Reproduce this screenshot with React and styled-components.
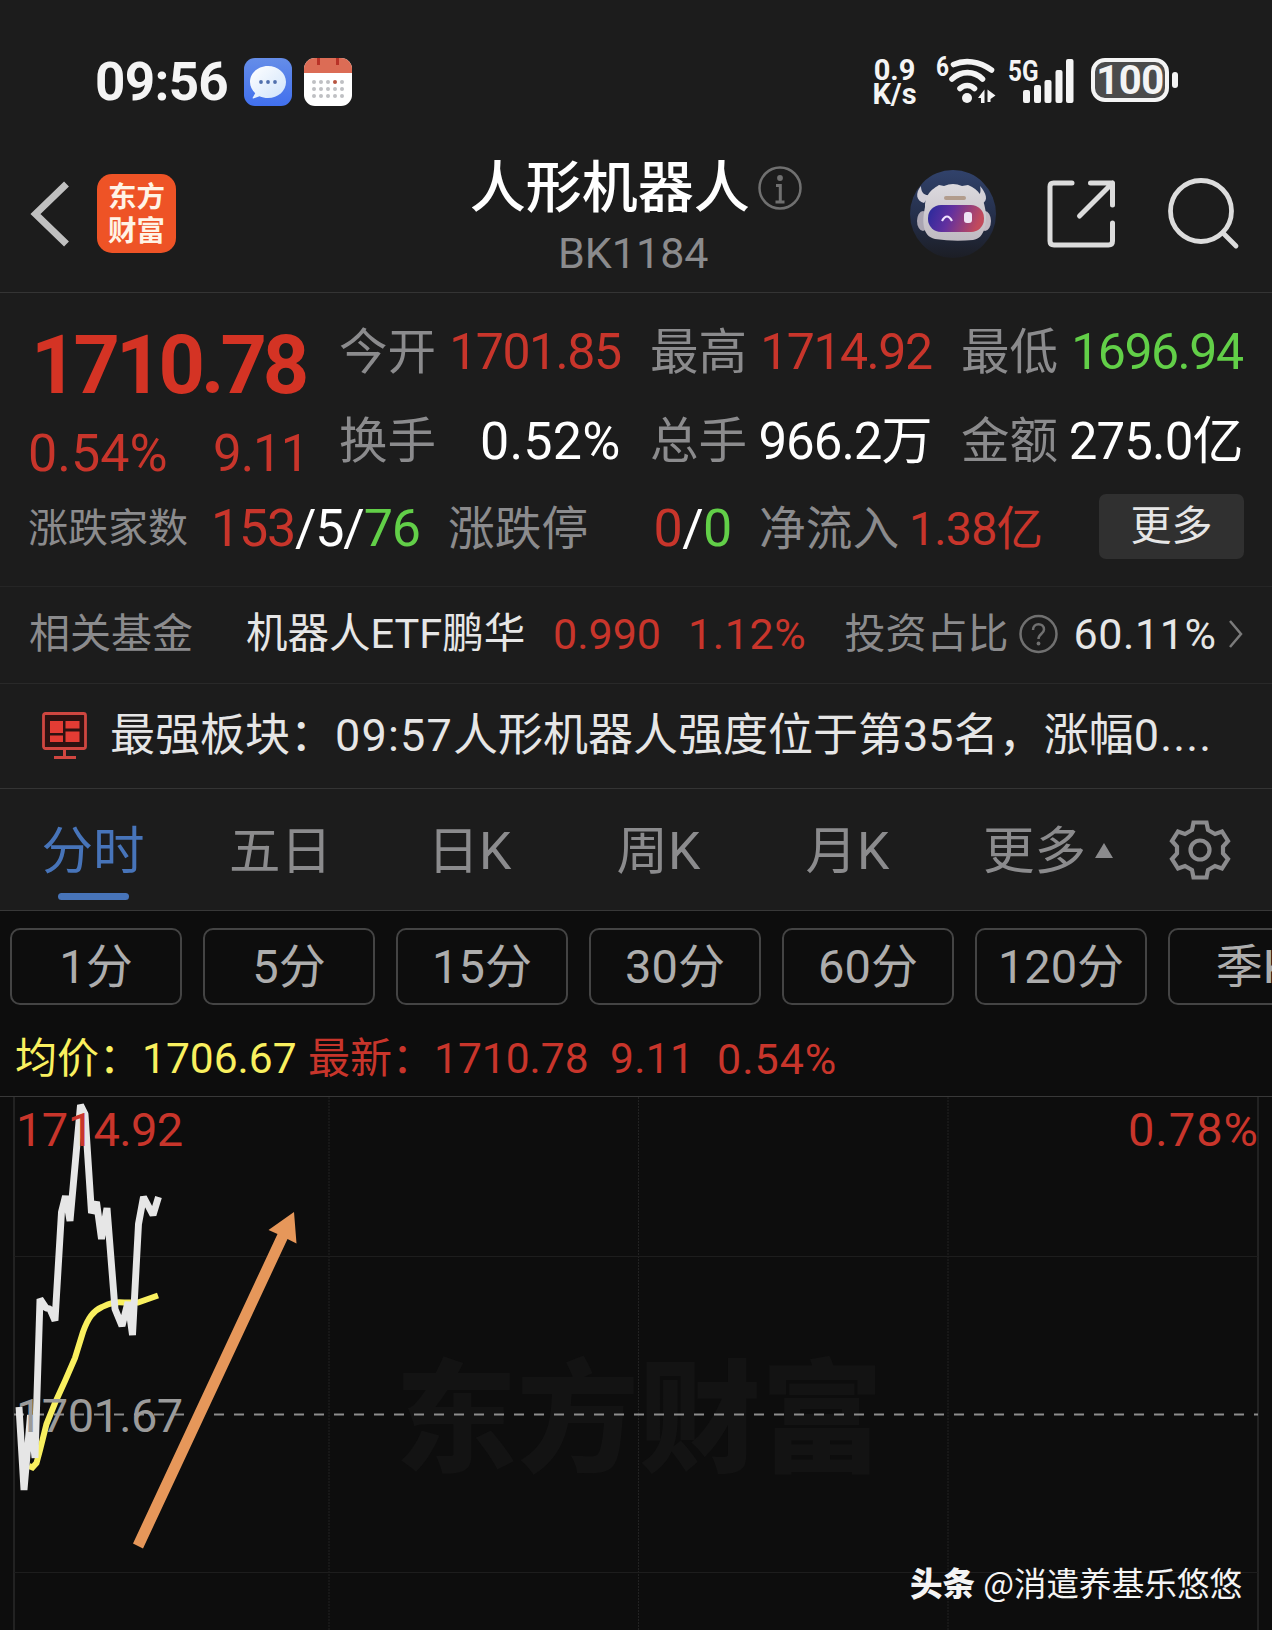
import React from 'react';
import styled, { createGlobalStyle } from 'styled-components';

const GlobalStyle = createGlobalStyle`
    * {
        box-sizing: border-box;
    }

    body {
        margin: 0;
        background: #0d0d0d;
        font-family: Roboto, 'Noto Sans CJK SC', sans-serif;
        overflow: hidden;
    }
`;

const RED = '#c8352b';
const GREEN = '#62cf48';
const GREY = '#8b8b8d';

const Screen = styled.div`
    width: 1272px;
    height: 1630px;
    overflow: hidden;
    display: flex;
    flex-direction: column;
    background: #0d0d0d;
    color: #ffffff;
    white-space: nowrap;
`;

const TopArea = styled.div`
    background: #1c1c1c;
`;

/* ---------- status bar ---------- */

const StatusBar = styled.div`
    height: 132px;
    padding: 32px 94px 0 95px;
    display: flex;
    align-items: center;
`;

const Clock = styled.div`
    width: 149px;
    font-size: 53px;
    font-weight: 700;
    line-height: 80px;
    letter-spacing: -0.7px;
    color: #f4f4f4;
`;

const AppBadges = styled.div`
    display: flex;
    gap: 12px;
    flex: 1;
`;

const NetSpeed = styled.div`
    width: 65px;
    font-size: 29px;
    font-weight: 700;
    line-height: 24.5px;
    text-align: center;
    padding-right: 18px;
    color: #f4f4f4;
`;

const WifiBox = styled.div`
    width: 72px;
    height: 50px;
    position: relative;
`;

const TinyTag = styled.span`
    position: absolute;
    left: 0;
    top: ${props => props.$top}px;
    font-size: ${props => props.$size}px;
    line-height: ${props => props.$size}px;
    font-weight: 700;
    transform: scaleX(0.84);
    transform-origin: left;
    color: #f4f4f4;
`;

const SignalBox = styled.div`
    width: 83px;
    height: 50px;
    position: relative;
`;

const Battery = styled.div`
    width: 78px;
    height: 44px;
    margin-top: -4px;
    border: 4px solid #f4f4f4;
    border-radius: 14px;
    background: #4b4b4b;
    font-size: 40px;
    font-weight: 700;
    line-height: 38px;
    letter-spacing: -0.5px;
    text-align: center;
    color: #f4f4f4;
`;

const BatteryTip = styled.div`
    width: 6px;
    height: 16px;
    margin: -4px 0 0 3px;
    border-radius: 3px;
    background: #f4f4f4;
`;

/* ---------- navigation ---------- */

const NavBar = styled.div`
    height: 161px;
    padding: 3px 32.5px 0 30px;
    display: grid;
    grid-template-columns: 1fr auto 1fr;
    align-items: center;
    border-bottom: 1px solid #343434;
`;

const NavLeft = styled.div`
    display: flex;
    align-items: center;
    gap: 26px;
`;

const NavRight = styled.div`
    display: flex;
    align-items: center;
    justify-content: flex-end;
    gap: 51px;
`;

const BrandLogo = styled.div`
    width: 79px;
    height: 79px;
    border-radius: 15px;
    background: #ee5326;
    padding-top: 6.5px;
    font-size: 28.5px;
    font-weight: 700;
    line-height: 34px;
    text-align: center;
    color: #fff3e6;
`;

const TitleBlock = styled.div`
    display: flex;
    flex-direction: column;
    align-items: center;
    padding: 7px 0 0 2px;
`;

const Title = styled.div`
    display: flex;
    align-items: center;
    gap: 8px;
    height: 72px;
    font-size: 56px;
    font-weight: 500;
    line-height: 72px;
`;

const Code = styled.div`
    padding-right: 5px;
    font-size: 43px;
    line-height: 59px;
    color: ${GREY};
`;

/* ---------- quote ---------- */

const Quote = styled.div`
    height: 294px;
    padding: 15px 28px 0 28px;
    border-bottom: 1px solid #252525;
`;

const QuoteTop = styled.div`
    display: flex;
    height: 178px;
`;

const PriceBlock = styled.div`
    width: 312px;
`;

const Price = styled.div`
    padding-left: 3px;
    line-height: 116px;
    font-size: 81px;
    font-weight: 700;
    letter-spacing: -4px;
    color: #d43324;
`;

const Change = styled.div`
    display: grid;
    grid-template-columns: 185px 100px;
    line-height: 60px;
    font-size: 52px;
    color: ${RED};
`;

const StatGrid = styled.div`
    display: grid;
    grid-template-columns: repeat(3, 283px);
    grid-auto-rows: 89px;
    column-gap: 28px;
`;

const Stat = styled.div`
    display: flex;
    justify-content: space-between;
    padding-right: 1.5px;
    line-height: 89px;
    font-size: 48.5px;
    color: ${GREY};
`;

const Breadth = styled.div`
    display: grid;
    grid-template-columns: 183px 237px 205.5px 105.5px 150px 190px 145px;
    align-items: center;
    height: 81px;
    padding-top: 4px;
    line-height: 60px;
`;

const Label = styled.span`
    font-size: ${props => props.$size}px;
    color: ${GREY};
`;

const Value = styled.span`
    font-size: ${props => props.$size}px;
    letter-spacing: ${props => props.$track || 0}px;
    color: ${props => props.$color || '#ffffff'};
`;

const Tint = styled.span`
    color: ${props => props.$color};
`;

const MoreButton = styled.button`
    width: 145px;
    height: 65px;
    margin-bottom: 4px;
    border: 0;
    border-radius: 7px;
    padding: 0;
    background: #303030;
    font-family: inherit;
    font-size: 41px;
    line-height: 65px;
    color: #e6e6e6;
`;

/* ---------- related fund, news ---------- */

const FundRow = styled.div`
    height: 97px;
    padding: 0 28px 3px 29px;
    display: grid;
    grid-template-columns: 217px 307px 135px 156.5px 174px 55px 154.5px 16px;
    align-items: center;
    line-height: 60px;
    border-bottom: 1px solid #292929;
`;

const NewsRow = styled.div`
    height: 105px;
    padding: 0 0 0 42px;
    display: flex;
    align-items: center;
    gap: 22px;
    border-bottom: 1px solid #343434;
`;

const NewsText = styled.div`
    font-size: 45px;
    line-height: 104px;
    color: #e6e6e6;
`;

const Spaced = styled.span`
    letter-spacing: 1.2px;
`;

/* ---------- tabs ---------- */

const Tabs = styled.div`
    height: 122px;
    display: flex;
    border-bottom: 1px solid #383838;
`;

const Tab = styled.div`
    width: ${props => props.$width || 189}px;
    height: 121px;
    display: flex;
    flex-direction: column;
    align-items: center;
    font-size: 51.5px;
    line-height: 126px;
    color: ${props => (props.$active ? '#4774b9' : GREY)};

    &::after {
        content: '';
        width: 71px;
        height: 7px;
        margin-top: -22px;
        border-radius: 4px;
        background: ${props => (props.$active ? '#4774b9' : 'transparent')};
    }
`;

const TabLabel = styled.span`
    display: flex;
    align-items: center;
    gap: 9px;

    svg {
        margin-bottom: 4px;
    }
`;

const GearBox = styled.div`
    display: flex;
    align-items: center;
    height: 121px;
    padding-left: 15px;
`;

/* ---------- periods ---------- */

const Periods = styled.div`
    display: flex;
    gap: 21px;
    padding: 17px 0 0 10px;
`;

const Period = styled.div`
    flex: 0 0 172px;
    height: 77px;
    border: 2px solid #444444;
    border-radius: 10px;
    font-size: 47px;
    line-height: 74px;
    text-align: center;
    color: #adadad;
`;

const Summary = styled.div`
    height: 91px;
    padding: 17px 0 0 15px;
    display: grid;
    grid-template-columns: 127px 166px 126px 176px 107px 150px;
    align-items: center;
    line-height: 60px;
`;

/* ---------- chart ---------- */

const Chart = styled.div`
    position: relative;
    flex: 1;
    border-top: 1px solid #383838;
`;

const Layer = styled.svg`
    position: absolute;
    left: 0;
    top: 0;
`;

const AxisLabel = styled.span`
    position: absolute;
    left: ${props => (props.$right ? 'auto' : '16px')};
    right: ${props => (props.$right ? '13px' : 'auto')};
    top: ${props => props.$top}px;
    font-size: 47px;
    line-height: 60px;
    letter-spacing: ${props => (props.$right ? 1 : -0.6)}px;
    color: ${props => props.$color};
`;

const Watermark = styled.div`
    position: absolute;
    left: 395px;
    top: 227px;
    font-family: 'Noto Sans CJK SC', sans-serif;
    font-size: 122px;
    line-height: 170px;
    font-weight: 900;
    color: #131313;
`;

const Credit = styled.div`
    position: absolute;
    right: 30px;
    bottom: 24px;
    display: flex;
    gap: 8px;
    font-family: 'Noto Sans CJK SC', sans-serif;
    font-size: 32.6px;
    line-height: 48px;
    color: #f4f4f4;

    b {
        font-weight: 900;
    }
`;

const stats = [
    { label: '今开', value: '1701.85', color: RED, size: 50, track: -1.5 },
    { label: '最高', value: '1714.92', color: RED, size: 50, track: -1.5 },
    { label: '最低', value: '1696.94', color: GREEN, size: 50, track: -1.5 },
    { label: '换手', value: '0.52%', color: '#ffffff', size: 52, track: 0.2 },
    { label: '总手', value: '966.2万', color: '#ffffff', size: 51, track: -1 },
    { label: '金额', value: '275.0亿', color: '#ffffff', size: 51, track: -0.9 },
];

const periods = ['1分', '5分', '15分', '30分', '60分', '120分', '季K'];

const MessageIcon = () => (
    <svg width="48" height="48" viewBox="0 0 48 48">
        <defs>
            <linearGradient id="msgBg" x1="0" y1="0" x2="0" y2="1">
                <stop offset="0" stopColor="#658de8" />
                <stop offset="1" stopColor="#4170ee" />
            </linearGradient>
            <linearGradient id="msgBubble" x1="0" y1="0" x2="1" y2="1">
                <stop offset="0" stopColor="#ffffff" />
                <stop offset="1" stopColor="#cfe3fb" />
            </linearGradient>
        </defs>
        <rect width="48" height="48" rx="11" fill="url(#msgBg)" />
        <path d="M24 8c10 0 18 7 18 16s-8 16-18 16c-3 0-6-.6-8.500-1.800L9.300 40.500c-.8.200-1-.5-.5-1l2.400-4.300C8 32.300 6 28.300 6 24 6 15 14 8 24 8z" fill="url(#msgBubble)" />
        <circle cx="17" cy="24" r="1.900" fill="#5170ad" />
        <circle cx="24" cy="24" r="1.900" fill="#5170ad" />
        <circle cx="31" cy="24" r="1.900" fill="#5170ad" />
    </svg>
);

const CalendarIcon = () => (
    <svg width="48" height="48" viewBox="0 0 48 48">
        <rect width="48" height="48" rx="11" fill="#ffffff" />
        <path d="M0 15V11A11 11 0 0 1 11 0H37A11 11 0 0 1 48 11V15z" fill="#dc6c55" />
        <path d="M14.500 0V7M33.500 0V7" stroke="#b93227" strokeWidth="3" />
        {[24, 31, 38].map(y => [10, 17, 24, 31, 38].map(x => (
            <circle key={`${x}-${y}`} cx={x} cy={y} r="2" fill={x === 31 && y === 24 ? '#b85440' : '#bfc0c3'} />
        )))}
    </svg>
);

const WifiIcon = () => (
    <svg width="62" height="50" viewBox="0 0 62 50" fill="none" stroke="#f4f4f4" strokeWidth="5.600" strokeLinecap="round">
        <path d="M17.500 7.500C29 2.500 43 4 55.500 13" />
        <path d="M16 22C25 13.500 38 13.500 46.500 22" />
        <path d="M24 31.500C28 27.500 34.500 27.500 38.500 31.500" />
        <circle cx="31" cy="41" r="5" fill="#f4f4f4" stroke="none" />
        <path d="M42 41L48.500 32.500V46H45V41zM51.500 32.500L59.500 38.500L54.500 42V45H51.500z" fill="#f4f4f4" stroke="none" />
    </svg>
);

const SignalIcon = () => (
    <svg width="74" height="50" viewBox="0 0 74 50" fill="#f4f4f4">
        <rect x="15" y="33" width="7" height="13" rx="2" />
        <rect x="26" y="28" width="7" height="18" rx="2" />
        <rect x="36.500" y="23" width="7" height="23" rx="2" />
        <rect x="47.500" y="13" width="7" height="33" rx="2" />
        <rect x="58" y="2" width="7.500" height="44" rx="2" />
    </svg>
);

const BackIcon = () => (
    <svg width="41" height="66" viewBox="0 0 41 66" fill="none" stroke="#c0c0c0" strokeWidth="7">
        <path d="M36.500 3L5.500 33L36.500 63" />
    </svg>
);

const InfoIcon = () => (
    <svg width="44" height="44" viewBox="0 0 44 44" fill="none" stroke="#707070" strokeWidth="2.500">
        <circle cx="22" cy="22" r="20.500" />
        <circle cx="22" cy="12" r="2.900" fill="#707070" stroke="none" />
        <path d="M18 19.500H22.300V35.500M17.500 36H26.500" strokeWidth="3" />
    </svg>
);

const RobotAvatar = () => (
    <svg width="86" height="88" viewBox="0 0 86 88">
        <defs>
            <linearGradient id="avatarBg" x1="0" y1="0" x2="0" y2="1">
                <stop offset="0" stopColor="#31426b" />
                <stop offset="0.600" stopColor="#232c45" />
                <stop offset="1" stopColor="#1c1e25" />
            </linearGradient>
            <linearGradient id="visor" x1="0" y1="0" x2="1" y2="0.200">
                <stop offset="0" stopColor="#262a9c" />
                <stop offset="0.450" stopColor="#62309f" />
                <stop offset="1" stopColor="#c24a5c" />
            </linearGradient>
            <linearGradient id="helmet" x1="0" y1="0" x2="0" y2="1">
                <stop offset="0" stopColor="#dcd9de" />
                <stop offset="1" stopColor="#bfbac1" />
            </linearGradient>
        </defs>
        <ellipse cx="43" cy="44" rx="43" ry="44" fill="url(#avatarBg)" />
        <path d="M11 16C5 23 6 31 14 33L20 25C13 26 11 21 11 16zM70 16C76 23 79 30 72 34L65 26C71 26 71 21 70 16z" fill="#d2cfd8" />
        <ellipse cx="13" cy="51" rx="6" ry="10" fill="#aaa5b2" />
        <ellipse cx="75" cy="51" rx="6" ry="10" fill="#c3b9c2" />
        <path d="M15 37C15 22 25 18 29 15L34 16Q43 12 52 16L58 15C70 20 73 28 75 38C78 51 75 69 63 70Q44 72 25 69C12 66 12 51 15 37z" fill="url(#helmet)" />
        <rect x="34" y="26" width="22" height="4" rx="2" fill="#b29c8d" />
        <rect x="18" y="35" width="56" height="27" rx="13" fill="url(#visor)" />
        <path d="M32 51Q37 42 42 51" fill="none" stroke="#f2e4ff" strokeWidth="2.200" />
        <rect x="54" y="42" width="8" height="11" rx="3" fill="#eee3f5" />
    </svg>
);

const ShareIcon = () => (
    <svg width="70" height="70" viewBox="0 0 70 70" fill="none" stroke="#dcdcdc" strokeWidth="5" strokeLinecap="round" strokeLinejoin="round">
        <path d="M25 4H6.500Q3 4 3 7.500V62Q3 66 7 66H61.500Q65.500 66 65.500 62V44" />
        <path d="M43.500 4H65.500V26M65.500 4L32.500 37" />
    </svg>
);

const SearchIcon = () => (
    <svg width="72" height="72" viewBox="0 0 72 72" fill="none" stroke="#dcdcdc" strokeWidth="4.800" strokeLinecap="round">
        <circle cx="33" cy="33" r="30.500" />
        <path d="M55 55L68 68" />
    </svg>
);

const HelpIcon = () => (
    <svg width="40" height="40" viewBox="0 0 40 40" fill="none" stroke="#707070" strokeWidth="2.500">
        <circle cx="19.500" cy="20" r="18" />
        <path d="M14 16C14 8 25 8.500 25 15.500C25 20 19.500 19.500 19.500 25" />
        <circle cx="19.500" cy="29.500" r="1.900" fill="#707070" stroke="none" />
    </svg>
);

const ArrowRight = () => (
    <svg width="16" height="30" viewBox="0 0 16 30" fill="none" stroke="#7b7b7b" strokeWidth="2.500">
        <path d="M2 2L13 15L2 28" />
    </svg>
);

const BoardIcon = () => (
    <svg width="46" height="48" viewBox="0 0 46 48">
        <rect x="1.500" y="1.500" width="42" height="35" rx="2" fill="#2c1211" stroke="#cf4640" strokeWidth="2.800" />
        <path d="M8 9H21V21H8zM23.500 9H37.500V16.500H23.500zM8 23.500H21V30H8zM23.500 19.500H37.500V30H23.500z" fill="#e33c34" />
        <path d="M22.500 37V44M12 45.500H34" stroke="#cf4640" strokeWidth="3" fill="none" />
    </svg>
);

const GearIcon = () => (
    <svg width="62" height="62" viewBox="0 0 62 62" fill="none" stroke={GREY} strokeWidth="4.200" strokeLinejoin="miter">
        <path d="M24.500 3.500H37.500L39 11L46 15L53 12.500L59 22L54 27.500V34.500L59 40L53 49.500L46 47L39 51L37.500 58.500H24.500L23 51L16 47L9 49.500L3 40L8 34.500V27.500L3 22L9 12.500L16 15L23 11z" />
        <circle cx="31" cy="31" r="9.500" />
    </svg>
);

const GridLines = () => (
    <Layer width="1272" height="533" viewBox="0 1097 1272 533" fill="none">
        <path d="M14 1097V1630M1258 1097V1630" stroke="#2a2a2a" strokeWidth="1.500" />
        <path d="M329 1097V1630M638.500 1097V1630M948 1097V1630" stroke="#222222" strokeDasharray="2 1" />
        <path d="M14 1256.500H1258M14 1572.500H1258" stroke="#1d1d1d" />
    </Layer>
);

const ChartLines = () => (
    <Layer width="1272" height="533" viewBox="0 1097 1272 533" fill="none">
        <path d="M14 1414.500H1258" stroke="#8d8d8d" strokeWidth="2.200" strokeDasharray="10 10" />
        <path
            d="M29 1466L32.500 1467.500L36.500 1463L40 1450L46.500 1424L55 1403L65 1381L75 1358L83 1332C88 1318 93 1311 102 1307C111 1302 117 1302 124 1302.500L138 1302.500L158 1295.500"
            stroke="#f9f05f"
            strokeWidth="6"
        />
        <path
            d="M19 1407L24 1490L30.500 1415L35 1458L40 1299L46 1308L50 1309L55 1320.500L61.500 1212L65.500 1196L70 1221L80.500 1105L85 1114L91.500 1213L96.500 1202L101.500 1239L107 1208L115 1309L122 1326L128 1302L132.500 1335L138.500 1224L143.500 1197L153 1215L158.500 1197"
            stroke="#e6e6e6"
            strokeWidth="6.900"
            strokeLinejoin="bevel"
        />
        <path d="M133 1543.500L143 1548.500L287.500 1239L296.500 1243.500L294 1212L268.500 1230L277.500 1234z" fill="#e6975a" />
    </Layer>
);

const App = () => {
    return (
        <Screen>
            <GlobalStyle />
            <TopArea>
                <StatusBar>
                    <Clock>09:56</Clock>
                    <AppBadges>
                        <MessageIcon />
                        <CalendarIcon />
                    </AppBadges>
                    <NetSpeed>0.9<br />K/s</NetSpeed>
                    <WifiBox>
                        <TinyTag $top={-3} $size={27}>6</TinyTag>
                        <WifiIcon />
                    </WifiBox>
                    <SignalBox>
                        <TinyTag $top={0} $size={29}>5G</TinyTag>
                        <SignalIcon />
                    </SignalBox>
                    <Battery>100</Battery>
                    <BatteryTip />
                </StatusBar>

                <NavBar>
                    <NavLeft>
                        <BackIcon />
                        <BrandLogo>东方<br />财富</BrandLogo>
                    </NavLeft>
                    <TitleBlock>
                        <Title>人形机器人<InfoIcon /></Title>
                        <Code>BK1184</Code>
                    </TitleBlock>
                    <NavRight>
                        <RobotAvatar />
                        <ShareIcon />
                        <SearchIcon />
                    </NavRight>
                </NavBar>

                <Quote>
                    <QuoteTop>
                        <PriceBlock>
                            <Price>1710.78</Price>
                            <Change>
                                <span>0.54%</span>
                                <Value $size={51} $track={-1} $color={RED}>9.11</Value>
                            </Change>
                        </PriceBlock>
                        <StatGrid>
                            {stats.map(item => (
                                <Stat key={item.label}>
                                    {item.label}
                                    <Value $color={item.color} $size={item.size} $track={item.track}>{item.value}</Value>
                                </Stat>
                            ))}
                        </StatGrid>
                    </QuoteTop>
                    <Breadth>
                        <Label $size={40}>涨跌家数</Label>
                        <Value $size={52} $track={-1.2}>
                            <Tint $color={RED}>153</Tint>/5/<Tint $color={GREEN}>76</Tint>
                        </Value>
                        <Label $size={46.7}>涨跌停</Label>
                        <Value $size={52} $track={-0.6}>
                            <Tint $color={RED}>0</Tint>/<Tint $color={GREEN}>0</Tint>
                        </Value>
                        <Label $size={46.7}>净流入</Label>
                        <Value $size={46.5} $track={-0.8} $color={RED}>1.38亿</Value>
                        <MoreButton>更多</MoreButton>
                    </Breadth>
                </Quote>

                <FundRow>
                    <Label $size={41}>相关基金</Label>
                    <Value $size={41.5} $color="#e6e6e6">机器人ETF鹏华</Value>
                    <Value $size={43} $color={RED}>0.990</Value>
                    <Value $size={43} $track={0.6} $color={RED}>1.12%</Value>
                    <Label $size={41}>投资占比</Label>
                    <HelpIcon />
                    <Value $size={43} $track={0.6} $color="#e6e6e6">60.11%</Value>
                    <ArrowRight />
                </FundRow>

                <NewsRow>
                    <BoardIcon />
                    <NewsText>
                        最强板块：<Spaced>09:57</Spaced>人形机器人强度位于第35名，涨幅<Spaced>0....</Spaced>
                    </NewsText>
                </NewsRow>

                <Tabs>
                    <Tab $active $width={186}>分时</Tab>
                    <Tab>五日</Tab>
                    <Tab>日K</Tab>
                    <Tab>周K</Tab>
                    <Tab>月K</Tab>
                    <Tab $width={212}>
                        <TabLabel>
                            更多
                            <svg width="18" height="15" viewBox="0 0 18 15"><path d="M9 0L18 15H0z" fill={GREY} /></svg>
                        </TabLabel>
                    </Tab>
                    <GearBox><GearIcon /></GearBox>
                </Tabs>
            </TopArea>

            <Periods>
                {periods.map(name => <Period key={name}>{name}</Period>)}
            </Periods>

            <Summary>
                <Value $size={42} $color="#f9f05f">均价：</Value>
                <Value $size={42.5} $color="#f9f05f">1706.67</Value>
                <Value $size={42} $color={RED}>最新：</Value>
                <Value $size={42.5} $color={RED}>1710.78</Value>
                <Value $size={42.5} $track={0.3} $color={RED}>9.11</Value>
                <Value $size={43} $track={1} $color={RED}>0.54%</Value>
            </Summary>

            <Chart>
                <GridLines />
                <Watermark>东方财富</Watermark>
                <ChartLines />
                <AxisLabel $top={3} $color={RED}>1714.92</AxisLabel>
                <AxisLabel $top={3} $color={RED} $right>0.78%</AxisLabel>
                <AxisLabel $top={289} $color="#9b9b9b">1701.67</AxisLabel>
                <Credit><b>头条</b>@消遣养基乐悠悠</Credit>
            </Chart>
        </Screen>
    );
};

export default App;
